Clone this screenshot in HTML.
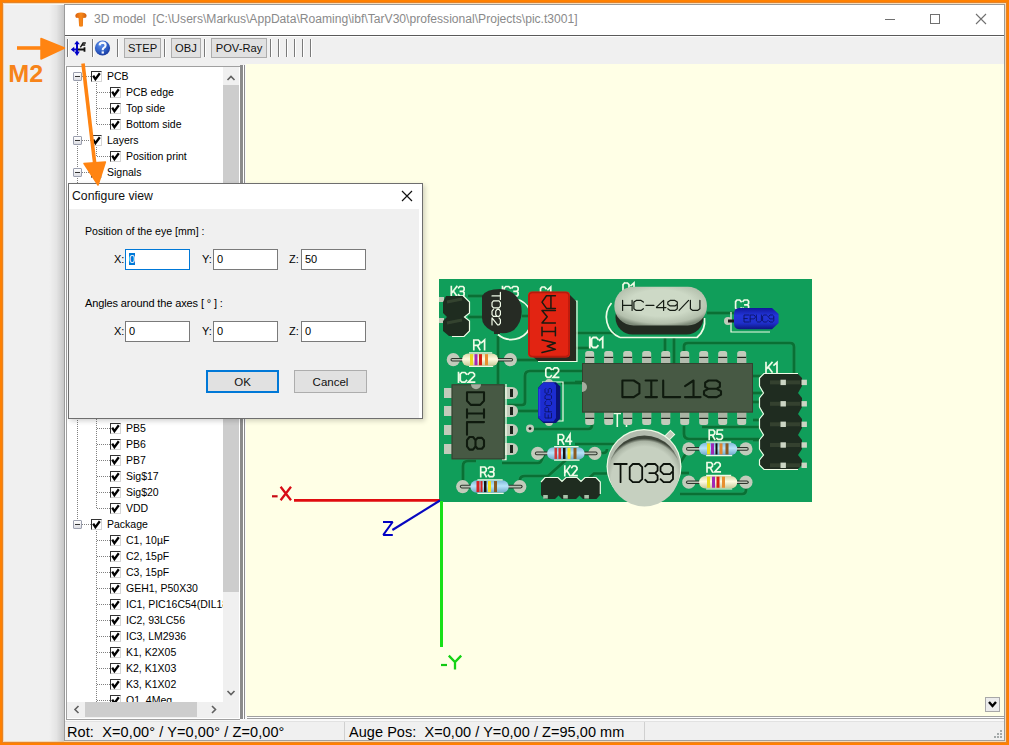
<!DOCTYPE html>
<html><head><meta charset="utf-8"><style>
*{margin:0;padding:0;box-sizing:border-box}
html,body{width:1009px;height:745px;overflow:hidden;background:#f0f0f0;font-family:"Liberation Sans",sans-serif;color:#000}
.a{position:absolute}
.sep{position:absolute;top:39px;width:1px;height:18px;background:#7a7a7a;box-shadow:1px 0 0 #fff}
.btn{position:absolute;top:38px;height:20px;border:1px solid #adadad;background:#e1e1e1;font-size:11.2px;line-height:19px;text-align:center;color:#111}
.tr{position:absolute;font-size:11px;line-height:16px;white-space:nowrap;transform:scaleX(0.955);transform-origin:0 0}
.cb{position:absolute;width:11px;height:11px;border-top:1px solid #333;border-left:1px solid #333;border-right:1px solid #d6d6d6;border-bottom:1px solid #d6d6d6;background:#fff}
.ck{position:absolute;left:-1px;top:-1px}
.mb{position:absolute;width:9px;height:9px;border:1px solid #9b9fae;border-radius:1px;background:linear-gradient(#fff,#dcdde3)}
.mb i{position:absolute;left:1px;top:3px;width:5px;height:1px;background:#333}
.vd{position:absolute;width:1px;background:repeating-linear-gradient(#808080 0 1px,transparent 1px 2px)}
.hd{position:absolute;height:1px;background:repeating-linear-gradient(90deg,#808080 0 1px,transparent 1px 2px)}
.lbl{position:absolute;font-size:11px;white-space:nowrap}
.inp{position:absolute;height:21px;width:65px;border:1px solid #7a7a7a;background:#fff;font-size:11px;padding-left:3px;line-height:19px}
.chev{position:absolute}
</style></head><body>
<div class="a" style="left:3px;top:3px;width:1003px;height:2px;background:#f6f8fa"></div>
<div class="a" style="left:49px;top:5px;width:15px;height:737px;background:linear-gradient(90deg,rgba(0,0,0,0),rgba(0,0,0,0.05) 50%,rgba(0,0,0,0.17))"></div>
<div class="a" style="left:64px;top:4px;width:941px;height:737px;background:#f0f0f0;border:1px solid #9a9a9a"></div>
<div class="a" style="left:65px;top:5px;width:939px;height:30px;background:#fff"></div>
<div class="a" style="left:65px;top:35px;width:939px;height:1px;background:#5a5a5a"></div>
<div class="a" style="left:65px;top:36px;width:939px;height:1px;background:#fff"></div>
<div class="a" style="left:94px;top:12px;font-size:12px;color:#8a8a8a;white-space:nowrap;transform:scaleX(1.0085);transform-origin:0 0">3D model&nbsp;&nbsp;[C:\Users\Markus\AppData\Roaming\ibf\TarV30\professional\Projects\pic.t3001]</div>
<svg class="a" style="left:0;top:0" width="1009" height="40">
 <path d="M885 19.5 H895" stroke="#707070" stroke-width="1"/>
 <rect x="930.5" y="14.5" width="9" height="9" fill="none" stroke="#707070" stroke-width="1"/>
 <path d="M976 14 L986 24 M986 14 L976 24" stroke="#707070" stroke-width="1.1"/>
 <defs><linearGradient id="tgi" x1="0" y1="0" x2="1" y2="0"><stop offset="0" stop-color="#d86010"/><stop offset="0.5" stop-color="#f88818"/><stop offset="1" stop-color="#d06010"/></linearGradient></defs>
 <path d="M75.3 15.5 Q75.8 12.6 81 12.6 Q86.2 12.6 86.6 15.5 Q86.6 17.9 85 17.9 Q83.6 17.3 83.1 18.2 L82.9 26.3 Q81 27 79.1 26.3 L78.6 18.2 Q78 17.3 76.8 17.9 Q75.2 17.7 75.3 15.5 Z" fill="url(#tgi)"/>
</svg>
<div class="sep" style="left:67px"></div>
<div class="sep" style="left:92px"></div>
<div class="sep" style="left:117px"></div>
<div class="btn" style="left:124px;width:37px">STEP</div>
<div class="sep" style="left:164px"></div>
<div class="btn" style="left:171px;width:30px">OBJ</div>
<div class="sep" style="left:204px"></div>
<div class="btn" style="left:211px;width:56px">POV-Ray</div>
<div class="sep" style="left:270px"></div>
<div class="sep" style="left:278px"></div>
<div class="sep" style="left:286px"></div>
<div class="sep" style="left:294px"></div>
<div class="sep" style="left:302px"></div>
<div class="sep" style="left:310px"></div>
<svg class="a" style="left:0;top:0" width="130" height="64">
 <defs><radialGradient id="hg" cx="0.38" cy="0.3" r="0.75"><stop offset="0" stop-color="#5d8fe8"/><stop offset="0.6" stop-color="#2d5cc4"/><stop offset="1" stop-color="#17369a"/></radialGradient></defs>
 <path d="M77 43.5 V52.5" stroke="#0000c8" stroke-width="2"/>
 <path d="M77 40.8 L74.2 44.2 H79.8 Z M77 56 L74.2 51.6 H79.8 Z M70.8 49.5 L74.2 46.8 V52.2 Z" fill="#0000c8"/>
 <path d="M73.5 49.5 H78" stroke="#0000c8" stroke-width="2"/>
 <path d="M78 49.5 H84.5 M84.5 47.2 V51.8" stroke="#101010" stroke-width="1.8"/>
 <path d="M80.4 47.3 L83.1 43 H85.8 M82.3 45 H85.2" stroke="#101010" stroke-width="1.3" fill="none"/>
 <circle cx="102.5" cy="48" r="7.6" fill="url(#hg)"/>
 <path d="M99.6 45.3 Q99.8 42.6 102.7 42.6 Q105.6 42.7 105.6 45.2 Q105.6 46.8 103.8 47.8 Q102.7 48.5 102.7 50.2" fill="none" stroke="#f4f8ff" stroke-width="2.1"/>
 <rect x="101.6" y="51.4" width="2.3" height="2.2" fill="#f4f8ff"/>
</svg>

<!-- tree panel -->
<div class="a" style="left:65px;top:65px;width:1px;height:655px;background:#fff"></div>
<div class="a" style="left:66px;top:66px;width:174px;height:654px;background:#fff;border-top:1px solid #a0a0a0;border-left:1px solid #a0a0a0;border-bottom:1px solid #a0a0a0"></div>
<div class="a" style="left:67px;top:67px;width:156px;height:635px;overflow:hidden"><div class="vd" style="left:10px;top:15px;height:438px"></div>
<div class="mb" style="left:6px;top:5px"><i></i></div>
<div class="hd" style="left:15px;top:9px;width:9px"></div>
<div class="cb" style="left:24px;top:4px"><svg class="ck" width="11" height="11" viewBox="0 0 11 11"><path d="M2.2 4.6 L4.4 8.2 L8.8 2.2" fill="none" stroke="#000" stroke-width="2.3" stroke-linejoin="miter"/></svg></div>
<div class="tr" style="left:40px;top:1px">PCB</div>
<div class="vd" style="left:29px;top:16px;height:42px"></div>
<div class="hd" style="left:30px;top:25px;width:13px"></div>
<div class="cb" style="left:43px;top:20px"><svg class="ck" width="11" height="11" viewBox="0 0 11 11"><path d="M2.2 4.6 L4.4 8.2 L8.8 2.2" fill="none" stroke="#000" stroke-width="2.3" stroke-linejoin="miter"/></svg></div>
<div class="tr" style="left:59px;top:17px">PCB edge</div>
<div class="hd" style="left:30px;top:41px;width:13px"></div>
<div class="cb" style="left:43px;top:36px"><svg class="ck" width="11" height="11" viewBox="0 0 11 11"><path d="M2.2 4.6 L4.4 8.2 L8.8 2.2" fill="none" stroke="#000" stroke-width="2.3" stroke-linejoin="miter"/></svg></div>
<div class="tr" style="left:59px;top:33px">Top side</div>
<div class="hd" style="left:30px;top:57px;width:13px"></div>
<div class="cb" style="left:43px;top:52px"><svg class="ck" width="11" height="11" viewBox="0 0 11 11"><path d="M2.2 4.6 L4.4 8.2 L8.8 2.2" fill="none" stroke="#000" stroke-width="2.3" stroke-linejoin="miter"/></svg></div>
<div class="tr" style="left:59px;top:49px">Bottom side</div>
<div class="mb" style="left:6px;top:69px"><i></i></div>
<div class="hd" style="left:15px;top:73px;width:9px"></div>
<div class="cb" style="left:24px;top:68px"><svg class="ck" width="11" height="11" viewBox="0 0 11 11"><path d="M2.2 4.6 L4.4 8.2 L8.8 2.2" fill="none" stroke="#000" stroke-width="2.3" stroke-linejoin="miter"/></svg></div>
<div class="tr" style="left:40px;top:65px">Layers</div>
<div class="vd" style="left:29px;top:80px;height:10px"></div>
<div class="hd" style="left:30px;top:89px;width:13px"></div>
<div class="cb" style="left:43px;top:84px"><svg class="ck" width="11" height="11" viewBox="0 0 11 11"><path d="M2.2 4.6 L4.4 8.2 L8.8 2.2" fill="none" stroke="#000" stroke-width="2.3" stroke-linejoin="miter"/></svg></div>
<div class="tr" style="left:59px;top:81px">Position print</div>
<div class="mb" style="left:6px;top:101px"><i></i></div>
<div class="hd" style="left:15px;top:105px;width:9px"></div>
<div class="cb" style="left:24px;top:100px"><svg class="ck" width="11" height="11" viewBox="0 0 11 11"><path d="M2.2 4.6 L4.4 8.2 L8.8 2.2" fill="none" stroke="#000" stroke-width="2.3" stroke-linejoin="miter"/></svg></div>
<div class="tr" style="left:40px;top:97px">Signals</div>
<div class="vd" style="left:29px;top:112px;height:330px"></div>
<div class="hd" style="left:30px;top:121px;width:13px"></div>
<div class="cb" style="left:43px;top:116px"><svg class="ck" width="11" height="11" viewBox="0 0 11 11"><path d="M2.2 4.6 L4.4 8.2 L8.8 2.2" fill="none" stroke="#000" stroke-width="2.3" stroke-linejoin="miter"/></svg></div>
<div class="tr" style="left:59px;top:113px">N$0</div>
<div class="hd" style="left:30px;top:137px;width:13px"></div>
<div class="cb" style="left:43px;top:132px"><svg class="ck" width="11" height="11" viewBox="0 0 11 11"><path d="M2.2 4.6 L4.4 8.2 L8.8 2.2" fill="none" stroke="#000" stroke-width="2.3" stroke-linejoin="miter"/></svg></div>
<div class="tr" style="left:59px;top:129px">N$1</div>
<div class="hd" style="left:30px;top:153px;width:13px"></div>
<div class="cb" style="left:43px;top:148px"><svg class="ck" width="11" height="11" viewBox="0 0 11 11"><path d="M2.2 4.6 L4.4 8.2 L8.8 2.2" fill="none" stroke="#000" stroke-width="2.3" stroke-linejoin="miter"/></svg></div>
<div class="tr" style="left:59px;top:145px">N$2</div>
<div class="hd" style="left:30px;top:169px;width:13px"></div>
<div class="cb" style="left:43px;top:164px"><svg class="ck" width="11" height="11" viewBox="0 0 11 11"><path d="M2.2 4.6 L4.4 8.2 L8.8 2.2" fill="none" stroke="#000" stroke-width="2.3" stroke-linejoin="miter"/></svg></div>
<div class="tr" style="left:59px;top:161px">N$3</div>
<div class="hd" style="left:30px;top:185px;width:13px"></div>
<div class="cb" style="left:43px;top:180px"><svg class="ck" width="11" height="11" viewBox="0 0 11 11"><path d="M2.2 4.6 L4.4 8.2 L8.8 2.2" fill="none" stroke="#000" stroke-width="2.3" stroke-linejoin="miter"/></svg></div>
<div class="tr" style="left:59px;top:177px">N$4</div>
<div class="hd" style="left:30px;top:201px;width:13px"></div>
<div class="cb" style="left:43px;top:196px"><svg class="ck" width="11" height="11" viewBox="0 0 11 11"><path d="M2.2 4.6 L4.4 8.2 L8.8 2.2" fill="none" stroke="#000" stroke-width="2.3" stroke-linejoin="miter"/></svg></div>
<div class="tr" style="left:59px;top:193px">N$5</div>
<div class="hd" style="left:30px;top:217px;width:13px"></div>
<div class="cb" style="left:43px;top:212px"><svg class="ck" width="11" height="11" viewBox="0 0 11 11"><path d="M2.2 4.6 L4.4 8.2 L8.8 2.2" fill="none" stroke="#000" stroke-width="2.3" stroke-linejoin="miter"/></svg></div>
<div class="tr" style="left:59px;top:209px">N$6</div>
<div class="hd" style="left:30px;top:233px;width:13px"></div>
<div class="cb" style="left:43px;top:228px"><svg class="ck" width="11" height="11" viewBox="0 0 11 11"><path d="M2.2 4.6 L4.4 8.2 L8.8 2.2" fill="none" stroke="#000" stroke-width="2.3" stroke-linejoin="miter"/></svg></div>
<div class="tr" style="left:59px;top:225px">N$7</div>
<div class="hd" style="left:30px;top:249px;width:13px"></div>
<div class="cb" style="left:43px;top:244px"><svg class="ck" width="11" height="11" viewBox="0 0 11 11"><path d="M2.2 4.6 L4.4 8.2 L8.8 2.2" fill="none" stroke="#000" stroke-width="2.3" stroke-linejoin="miter"/></svg></div>
<div class="tr" style="left:59px;top:241px">N$8</div>
<div class="hd" style="left:30px;top:265px;width:13px"></div>
<div class="cb" style="left:43px;top:260px"><svg class="ck" width="11" height="11" viewBox="0 0 11 11"><path d="M2.2 4.6 L4.4 8.2 L8.8 2.2" fill="none" stroke="#000" stroke-width="2.3" stroke-linejoin="miter"/></svg></div>
<div class="tr" style="left:59px;top:257px">N$9</div>
<div class="hd" style="left:30px;top:281px;width:13px"></div>
<div class="cb" style="left:43px;top:276px"><svg class="ck" width="11" height="11" viewBox="0 0 11 11"><path d="M2.2 4.6 L4.4 8.2 L8.8 2.2" fill="none" stroke="#000" stroke-width="2.3" stroke-linejoin="miter"/></svg></div>
<div class="tr" style="left:59px;top:273px">N$10</div>
<div class="hd" style="left:30px;top:297px;width:13px"></div>
<div class="cb" style="left:43px;top:292px"><svg class="ck" width="11" height="11" viewBox="0 0 11 11"><path d="M2.2 4.6 L4.4 8.2 L8.8 2.2" fill="none" stroke="#000" stroke-width="2.3" stroke-linejoin="miter"/></svg></div>
<div class="tr" style="left:59px;top:289px">N$11</div>
<div class="hd" style="left:30px;top:313px;width:13px"></div>
<div class="cb" style="left:43px;top:308px"><svg class="ck" width="11" height="11" viewBox="0 0 11 11"><path d="M2.2 4.6 L4.4 8.2 L8.8 2.2" fill="none" stroke="#000" stroke-width="2.3" stroke-linejoin="miter"/></svg></div>
<div class="tr" style="left:59px;top:305px">N$12</div>
<div class="hd" style="left:30px;top:329px;width:13px"></div>
<div class="cb" style="left:43px;top:324px"><svg class="ck" width="11" height="11" viewBox="0 0 11 11"><path d="M2.2 4.6 L4.4 8.2 L8.8 2.2" fill="none" stroke="#000" stroke-width="2.3" stroke-linejoin="miter"/></svg></div>
<div class="tr" style="left:59px;top:321px">N$13</div>
<div class="hd" style="left:30px;top:345px;width:13px"></div>
<div class="cb" style="left:43px;top:340px"><svg class="ck" width="11" height="11" viewBox="0 0 11 11"><path d="M2.2 4.6 L4.4 8.2 L8.8 2.2" fill="none" stroke="#000" stroke-width="2.3" stroke-linejoin="miter"/></svg></div>
<div class="tr" style="left:59px;top:337px">N$14</div>
<div class="hd" style="left:30px;top:361px;width:13px"></div>
<div class="cb" style="left:43px;top:356px"><svg class="ck" width="11" height="11" viewBox="0 0 11 11"><path d="M2.2 4.6 L4.4 8.2 L8.8 2.2" fill="none" stroke="#000" stroke-width="2.3" stroke-linejoin="miter"/></svg></div>
<div class="tr" style="left:59px;top:353px">PB5</div>
<div class="hd" style="left:30px;top:377px;width:13px"></div>
<div class="cb" style="left:43px;top:372px"><svg class="ck" width="11" height="11" viewBox="0 0 11 11"><path d="M2.2 4.6 L4.4 8.2 L8.8 2.2" fill="none" stroke="#000" stroke-width="2.3" stroke-linejoin="miter"/></svg></div>
<div class="tr" style="left:59px;top:369px">PB6</div>
<div class="hd" style="left:30px;top:393px;width:13px"></div>
<div class="cb" style="left:43px;top:388px"><svg class="ck" width="11" height="11" viewBox="0 0 11 11"><path d="M2.2 4.6 L4.4 8.2 L8.8 2.2" fill="none" stroke="#000" stroke-width="2.3" stroke-linejoin="miter"/></svg></div>
<div class="tr" style="left:59px;top:385px">PB7</div>
<div class="hd" style="left:30px;top:409px;width:13px"></div>
<div class="cb" style="left:43px;top:404px"><svg class="ck" width="11" height="11" viewBox="0 0 11 11"><path d="M2.2 4.6 L4.4 8.2 L8.8 2.2" fill="none" stroke="#000" stroke-width="2.3" stroke-linejoin="miter"/></svg></div>
<div class="tr" style="left:59px;top:401px">Sig$17</div>
<div class="hd" style="left:30px;top:425px;width:13px"></div>
<div class="cb" style="left:43px;top:420px"><svg class="ck" width="11" height="11" viewBox="0 0 11 11"><path d="M2.2 4.6 L4.4 8.2 L8.8 2.2" fill="none" stroke="#000" stroke-width="2.3" stroke-linejoin="miter"/></svg></div>
<div class="tr" style="left:59px;top:417px">Sig$20</div>
<div class="hd" style="left:30px;top:441px;width:13px"></div>
<div class="cb" style="left:43px;top:436px"><svg class="ck" width="11" height="11" viewBox="0 0 11 11"><path d="M2.2 4.6 L4.4 8.2 L8.8 2.2" fill="none" stroke="#000" stroke-width="2.3" stroke-linejoin="miter"/></svg></div>
<div class="tr" style="left:59px;top:433px">VDD</div>
<div class="mb" style="left:6px;top:453px"><i></i></div>
<div class="hd" style="left:15px;top:457px;width:9px"></div>
<div class="cb" style="left:24px;top:452px"><svg class="ck" width="11" height="11" viewBox="0 0 11 11"><path d="M2.2 4.6 L4.4 8.2 L8.8 2.2" fill="none" stroke="#000" stroke-width="2.3" stroke-linejoin="miter"/></svg></div>
<div class="tr" style="left:40px;top:449px">Package</div>
<div class="vd" style="left:29px;top:464px;height:186px"></div>
<div class="hd" style="left:30px;top:473px;width:13px"></div>
<div class="cb" style="left:43px;top:468px"><svg class="ck" width="11" height="11" viewBox="0 0 11 11"><path d="M2.2 4.6 L4.4 8.2 L8.8 2.2" fill="none" stroke="#000" stroke-width="2.3" stroke-linejoin="miter"/></svg></div>
<div class="tr" style="left:59px;top:465px">C1, 10µF</div>
<div class="hd" style="left:30px;top:489px;width:13px"></div>
<div class="cb" style="left:43px;top:484px"><svg class="ck" width="11" height="11" viewBox="0 0 11 11"><path d="M2.2 4.6 L4.4 8.2 L8.8 2.2" fill="none" stroke="#000" stroke-width="2.3" stroke-linejoin="miter"/></svg></div>
<div class="tr" style="left:59px;top:481px">C2, 15pF</div>
<div class="hd" style="left:30px;top:505px;width:13px"></div>
<div class="cb" style="left:43px;top:500px"><svg class="ck" width="11" height="11" viewBox="0 0 11 11"><path d="M2.2 4.6 L4.4 8.2 L8.8 2.2" fill="none" stroke="#000" stroke-width="2.3" stroke-linejoin="miter"/></svg></div>
<div class="tr" style="left:59px;top:497px">C3, 15pF</div>
<div class="hd" style="left:30px;top:521px;width:13px"></div>
<div class="cb" style="left:43px;top:516px"><svg class="ck" width="11" height="11" viewBox="0 0 11 11"><path d="M2.2 4.6 L4.4 8.2 L8.8 2.2" fill="none" stroke="#000" stroke-width="2.3" stroke-linejoin="miter"/></svg></div>
<div class="tr" style="left:59px;top:513px">GEH1, P50X30</div>
<div class="hd" style="left:30px;top:537px;width:13px"></div>
<div class="cb" style="left:43px;top:532px"><svg class="ck" width="11" height="11" viewBox="0 0 11 11"><path d="M2.2 4.6 L4.4 8.2 L8.8 2.2" fill="none" stroke="#000" stroke-width="2.3" stroke-linejoin="miter"/></svg></div>
<div class="tr" style="left:59px;top:529px">IC1, PIC16C54(DIL18)</div>
<div class="hd" style="left:30px;top:553px;width:13px"></div>
<div class="cb" style="left:43px;top:548px"><svg class="ck" width="11" height="11" viewBox="0 0 11 11"><path d="M2.2 4.6 L4.4 8.2 L8.8 2.2" fill="none" stroke="#000" stroke-width="2.3" stroke-linejoin="miter"/></svg></div>
<div class="tr" style="left:59px;top:545px">IC2, 93LC56</div>
<div class="hd" style="left:30px;top:569px;width:13px"></div>
<div class="cb" style="left:43px;top:564px"><svg class="ck" width="11" height="11" viewBox="0 0 11 11"><path d="M2.2 4.6 L4.4 8.2 L8.8 2.2" fill="none" stroke="#000" stroke-width="2.3" stroke-linejoin="miter"/></svg></div>
<div class="tr" style="left:59px;top:561px">IC3, LM2936</div>
<div class="hd" style="left:30px;top:585px;width:13px"></div>
<div class="cb" style="left:43px;top:580px"><svg class="ck" width="11" height="11" viewBox="0 0 11 11"><path d="M2.2 4.6 L4.4 8.2 L8.8 2.2" fill="none" stroke="#000" stroke-width="2.3" stroke-linejoin="miter"/></svg></div>
<div class="tr" style="left:59px;top:577px">K1, K2X05</div>
<div class="hd" style="left:30px;top:601px;width:13px"></div>
<div class="cb" style="left:43px;top:596px"><svg class="ck" width="11" height="11" viewBox="0 0 11 11"><path d="M2.2 4.6 L4.4 8.2 L8.8 2.2" fill="none" stroke="#000" stroke-width="2.3" stroke-linejoin="miter"/></svg></div>
<div class="tr" style="left:59px;top:593px">K2, K1X03</div>
<div class="hd" style="left:30px;top:617px;width:13px"></div>
<div class="cb" style="left:43px;top:612px"><svg class="ck" width="11" height="11" viewBox="0 0 11 11"><path d="M2.2 4.6 L4.4 8.2 L8.8 2.2" fill="none" stroke="#000" stroke-width="2.3" stroke-linejoin="miter"/></svg></div>
<div class="tr" style="left:59px;top:609px">K3, K1X02</div>
<div class="hd" style="left:30px;top:633px;width:13px"></div>
<div class="cb" style="left:43px;top:628px"><svg class="ck" width="11" height="11" viewBox="0 0 11 11"><path d="M2.2 4.6 L4.4 8.2 L8.8 2.2" fill="none" stroke="#000" stroke-width="2.3" stroke-linejoin="miter"/></svg></div>
<div class="tr" style="left:59px;top:625px">Q1, 4Meg</div>
<div class="hd" style="left:30px;top:649px;width:13px"></div>
<div class="cb" style="left:43px;top:644px"><svg class="ck" width="11" height="11" viewBox="0 0 11 11"><path d="M2.2 4.6 L4.4 8.2 L8.8 2.2" fill="none" stroke="#000" stroke-width="2.3" stroke-linejoin="miter"/></svg></div>
<div class="tr" style="left:59px;top:641px">R1, 1k</div></div>
<!-- v scrollbar -->
<div class="a" style="left:223px;top:67px;width:16px;height:635px;background:#f0f0f0"></div>
<div class="a" style="left:223px;top:85px;width:16px;height:507px;background:#cdcdcd"></div>
<!-- h scrollbar -->
<div class="a" style="left:67px;top:702px;width:172px;height:16px;background:#f0f0f0"></div><div class="a" style="left:67px;top:718px;width:173px;height:1px;background:#fff"></div>
<div class="a" style="left:85px;top:702px;width:112px;height:15px;background:#cdcdcd"></div>
<svg class="a" style="left:0;top:0;" width="245" height="720">
 <path d="M227.5 80 L231 76.5 L234.5 80" fill="none" stroke="#606060" stroke-width="1.6"/>
 <path d="M227.5 691 L231 694.5 L234.5 691" fill="none" stroke="#606060" stroke-width="1.6"/>
 <path d="M78.5 706 L75 709.5 L78.5 713" fill="none" stroke="#606060" stroke-width="1.6"/>
 <path d="M212 706 L215.5 709.5 L212 713" fill="none" stroke="#606060" stroke-width="1.6"/>
</svg>
<!-- splitter -->
<div class="a" style="left:240px;top:65px;width:3px;height:655px;background:#8c8c8c"></div>
<div class="a" style="left:243px;top:65px;width:1px;height:655px;background:#fff"></div>
<div class="a" style="left:244px;top:65px;width:1px;height:656px;background:#8c8c8c"></div>

<!-- viewport -->
<div class="a" style="left:245px;top:64px;width:759px;height:655px;background:#fafafa"></div>
<div class="a" style="left:246px;top:64px;width:758px;height:652px;background:#ffffe6"></div>
<div class="a" style="left:247px;top:716px;width:757px;height:1px;background:#a0a0a0"></div>
<div class="a" style="left:247px;top:717px;width:757px;height:1px;background:#fff"></div>
<div class="a" style="left:247px;top:718px;width:757px;height:1px;background:#a0a0a0"></div>
<div class="a" style="left:985px;top:697px;width:15px;height:15px;background:#ececec;border:1px solid #a8a8a8"></div>
<svg class="a" style="left:0;top:0" width="1009" height="745">
<defs><radialGradient id="qg" cx="0.5" cy="0.42" r="0.62"><stop offset="0.55" stop-color="#cdd9c6"/><stop offset="0.85" stop-color="#b4c0ad"/><stop offset="1" stop-color="#7d8a78"/></radialGradient><radialGradient id="tg" cx="0.5" cy="0.62" r="0.58"><stop offset="0.8" stop-color="#c6d0c0"/><stop offset="0.93" stop-color="#aab4a4"/><stop offset="1" stop-color="#3e463a"/></radialGradient><linearGradient id="bl" x1="0" y1="0" x2="0" y2="1"><stop offset="0" stop-color="#10189a"/><stop offset="0.35" stop-color="#2234d8"/><stop offset="0.7" stop-color="#1f30cc"/><stop offset="1" stop-color="#0c1480"/></linearGradient><linearGradient id="bl2" x1="0" y1="0" x2="1" y2="0"><stop offset="0" stop-color="#10189a"/><stop offset="0.3" stop-color="#2234d8"/><stop offset="0.7" stop-color="#1f30cc"/><stop offset="1" stop-color="#0a107a"/></linearGradient><linearGradient id="rc" x1="0" y1="0" x2="0" y2="1"><stop offset="0" stop-color="#d8d8a8"/><stop offset="0.45" stop-color="#fffbe0"/><stop offset="1" stop-color="#c8c898"/></linearGradient><linearGradient id="rb" x1="0" y1="0" x2="0" y2="1"><stop offset="0" stop-color="#7fb8d8"/><stop offset="0.45" stop-color="#b8e4fa"/><stop offset="1" stop-color="#6fa8c8"/></linearGradient></defs>
<rect x="439" y="279" width="373" height="223" fill="#109e5a"/>
<path d="M468 296 H483" fill="none" stroke="#1b9a5c" stroke-width="4.6"/>
<path d="M468 317 H483" fill="none" stroke="#1b9a5c" stroke-width="4.6"/>
<path d="M522 316 H528" fill="none" stroke="#1b9a5c" stroke-width="4.6"/>
<path d="M498 336 V384" fill="none" stroke="#1b9a5c" stroke-width="4.6"/>
<path d="M510 360 H538" fill="none" stroke="#1b9a5c" stroke-width="4.6"/>
<path d="M508 405 H522 Q525 405 525 402 V376 Q525 371 530 371 H583" fill="none" stroke="#1b9a5c" stroke-width="4.6"/>
<path d="M508 411 H539" fill="none" stroke="#1b9a5c" stroke-width="4.6"/>
<path d="M561 383 H583" fill="none" stroke="#1b9a5c" stroke-width="4.6"/>
<path d="M576 333 H615" fill="none" stroke="#1b9a5c" stroke-width="4.6"/>
<path d="M576 348 H590" fill="none" stroke="#1b9a5c" stroke-width="4.6"/>
<path d="M707 313 H734" fill="none" stroke="#1b9a5c" stroke-width="4.6"/>
<path d="M665 337 V352" fill="none" stroke="#1b9a5c" stroke-width="4.6"/>
<path d="M674 337 V363" fill="none" stroke="#1b9a5c" stroke-width="4.6"/>
<path d="M684 352 V346 Q684 343 688 343 H790 Q794 343 794 347 V374" fill="none" stroke="#1b9a5c" stroke-width="4.6"/>
<path d="M753 376 H780" fill="none" stroke="#1b9a5c" stroke-width="4.6"/>
<path d="M753 393 H780" fill="none" stroke="#1b9a5c" stroke-width="4.6"/>
<path d="M753 402 H780" fill="none" stroke="#1b9a5c" stroke-width="4.6"/>
<path d="M530 429 H588 Q592 429 592 425 V420" fill="none" stroke="#1b9a5c" stroke-width="4.6"/>
<path d="M463 486 V466 Q463 461 468 461 H476" fill="none" stroke="#1b9a5c" stroke-width="4.6"/>
<path d="M502 463 H538 Q541 463 542 459 L544 455" fill="none" stroke="#1b9a5c" stroke-width="4.6"/>
<path d="M520 486 V480 Q520 476 525 476 H548 L566 460" fill="none" stroke="#1b9a5c" stroke-width="4.6"/>
<path d="M595 453 H603 Q607 453 607 449" fill="none" stroke="#1b9a5c" stroke-width="4.6"/>
<path d="M589 478 L594 473.5 H608" fill="none" stroke="#1b9a5c" stroke-width="4.6"/>
<path d="M575 444 H615" fill="none" stroke="#1b9a5c" stroke-width="4.6"/>
<path d="M684 426 V434 Q684 439 690 439 H760" fill="none" stroke="#1b9a5c" stroke-width="4.6"/>
<path d="M702 427 H760" fill="none" stroke="#1b9a5c" stroke-width="4.6"/>
<path d="M680 463 L689 449" fill="none" stroke="#1b9a5c" stroke-width="4.6"/>
<path d="M680 473 H689" fill="none" stroke="#1b9a5c" stroke-width="4.6"/>
<path d="M746 482 V490 Q746 494 742 494 H680" fill="none" stroke="#1b9a5c" stroke-width="4.6"/>
<path d="M753 420 H780" fill="none" stroke="#1b9a5c" stroke-width="4.6"/>
<path d="M753 440 H780" fill="none" stroke="#1b9a5c" stroke-width="4.6"/>
<path d="M600 371 H583" fill="none" stroke="#1b9a5c" stroke-width="4.6"/>
<path d="M575 382 H583" fill="none" stroke="#1b9a5c" stroke-width="4.6"/>
<path d="M468 296 H483" fill="none" stroke="#0a7034" stroke-width="2.7"/>
<path d="M468 317 H483" fill="none" stroke="#0a7034" stroke-width="2.7"/>
<path d="M522 316 H528" fill="none" stroke="#0a7034" stroke-width="2.7"/>
<path d="M498 336 V384" fill="none" stroke="#0a7034" stroke-width="2.7"/>
<path d="M510 360 H538" fill="none" stroke="#0a7034" stroke-width="2.7"/>
<path d="M508 405 H522 Q525 405 525 402 V376 Q525 371 530 371 H583" fill="none" stroke="#0a7034" stroke-width="2.7"/>
<path d="M508 411 H539" fill="none" stroke="#0a7034" stroke-width="2.7"/>
<path d="M561 383 H583" fill="none" stroke="#0a7034" stroke-width="2.7"/>
<path d="M576 333 H615" fill="none" stroke="#0a7034" stroke-width="2.7"/>
<path d="M576 348 H590" fill="none" stroke="#0a7034" stroke-width="2.7"/>
<path d="M707 313 H734" fill="none" stroke="#0a7034" stroke-width="2.7"/>
<path d="M665 337 V352" fill="none" stroke="#0a7034" stroke-width="2.7"/>
<path d="M674 337 V363" fill="none" stroke="#0a7034" stroke-width="2.7"/>
<path d="M684 352 V346 Q684 343 688 343 H790 Q794 343 794 347 V374" fill="none" stroke="#0a7034" stroke-width="2.7"/>
<path d="M753 376 H780" fill="none" stroke="#0a7034" stroke-width="2.7"/>
<path d="M753 393 H780" fill="none" stroke="#0a7034" stroke-width="2.7"/>
<path d="M753 402 H780" fill="none" stroke="#0a7034" stroke-width="2.7"/>
<path d="M530 429 H588 Q592 429 592 425 V420" fill="none" stroke="#0a7034" stroke-width="2.7"/>
<path d="M463 486 V466 Q463 461 468 461 H476" fill="none" stroke="#0a7034" stroke-width="2.7"/>
<path d="M502 463 H538 Q541 463 542 459 L544 455" fill="none" stroke="#0a7034" stroke-width="2.7"/>
<path d="M520 486 V480 Q520 476 525 476 H548 L566 460" fill="none" stroke="#0a7034" stroke-width="2.7"/>
<path d="M595 453 H603 Q607 453 607 449" fill="none" stroke="#0a7034" stroke-width="2.7"/>
<path d="M589 478 L594 473.5 H608" fill="none" stroke="#0a7034" stroke-width="2.7"/>
<path d="M575 444 H615" fill="none" stroke="#0a7034" stroke-width="2.7"/>
<path d="M684 426 V434 Q684 439 690 439 H760" fill="none" stroke="#0a7034" stroke-width="2.7"/>
<path d="M702 427 H760" fill="none" stroke="#0a7034" stroke-width="2.7"/>
<path d="M680 463 L689 449" fill="none" stroke="#0a7034" stroke-width="2.7"/>
<path d="M680 473 H689" fill="none" stroke="#0a7034" stroke-width="2.7"/>
<path d="M746 482 V490 Q746 494 742 494 H680" fill="none" stroke="#0a7034" stroke-width="2.7"/>
<path d="M753 420 H780" fill="none" stroke="#0a7034" stroke-width="2.7"/>
<path d="M753 440 H780" fill="none" stroke="#0a7034" stroke-width="2.7"/>
<path d="M600 371 H583" fill="none" stroke="#0a7034" stroke-width="2.7"/>
<path d="M575 382 H583" fill="none" stroke="#0a7034" stroke-width="2.7"/>
<path d="M451.30 286.50 L451.30 296.10 M456.80 286.50 L451.30 293.43 M453.32 290.98 L456.80 296.10 M458.60 287.78 L459.70 286.50 L463.00 286.50 L464.10 287.78 L464.10 290.02 L463.00 291.30 L460.43 291.30 M463.00 291.30 L464.10 292.58 L464.10 294.82 L463.00 296.10 L459.70 296.10 L458.60 294.82" fill="none" stroke="#effbe6" stroke-width="1.7" stroke-linecap="square" stroke-linejoin="miter"/>
<path d="M502.50 286.50 L502.50 296.10 M510.30 288.10 L508.80 286.50 L505.80 286.50 L504.30 288.10 L504.30 294.50 L505.80 296.10 L508.80 296.10 L510.30 294.50 M512.10 287.78 L513.30 286.50 L516.90 286.50 L518.10 287.78 L518.10 290.02 L516.90 291.30 L514.10 291.30 M516.90 291.30 L518.10 292.58 L518.10 294.82 L516.90 296.10 L513.30 296.10 L512.10 294.82" fill="none" stroke="#effbe6" stroke-width="1.7" stroke-linecap="square" stroke-linejoin="miter"/>
<path d="M473.80 349.60 L473.80 340.00 L478.30 340.00 L479.80 341.60 L479.80 343.73 L478.30 345.33 L473.80 345.33 M477.30 345.33 L479.80 349.60 M481.60 342.67 L484.60 340.00 L484.60 349.60" fill="none" stroke="#effbe6" stroke-width="1.7" stroke-linecap="square" stroke-linejoin="miter"/>
<path d="M589.80 337.50 L589.80 347.50 M597.80 339.17 L596.25 337.50 L593.15 337.50 L591.60 339.17 L591.60 345.83 L593.15 347.50 L596.25 347.50 L597.80 345.83 M599.60 340.28 L602.70 337.50 L602.70 347.50" fill="none" stroke="#effbe6" stroke-width="1.8" stroke-linecap="square" stroke-linejoin="miter"/>
<path d="M458.50 372.50 L458.50 382.10 M466.50 374.10 L464.95 372.50 L461.85 372.50 L460.30 374.10 L460.30 380.50 L461.85 382.10 L464.95 382.10 L466.50 380.50 M468.30 374.10 L469.85 372.50 L472.95 372.50 L474.50 374.10 L474.50 375.91 L468.30 382.10 L474.50 382.10" fill="none" stroke="#effbe6" stroke-width="1.7" stroke-linecap="square" stroke-linejoin="miter"/>
<path d="M551.30 369.40 L549.92 367.80 L547.17 367.80 L545.80 369.40 L545.80 375.80 L547.17 377.40 L549.92 377.40 L551.30 375.80 M553.10 369.40 L554.47 367.80 L557.22 367.80 L558.60 369.40 L558.60 371.21 L553.10 377.40 L558.60 377.40" fill="none" stroke="#effbe6" stroke-width="1.7" stroke-linecap="square" stroke-linejoin="miter"/>
<path d="M558.20 444.10 L558.20 434.50 L562.33 434.50 L563.70 436.10 L563.70 438.23 L562.33 439.83 L558.20 439.83 M561.41 439.83 L563.70 444.10 M570.03 444.10 L570.03 434.50 L565.90 440.90 L565.90 441.43 L571.40 441.43" fill="none" stroke="#effbe6" stroke-width="1.7" stroke-linecap="square" stroke-linejoin="miter"/>
<path d="M480.70 476.60 L480.70 467.00 L484.82 467.00 L486.20 468.60 L486.20 470.73 L484.82 472.33 L480.70 472.33 M483.91 472.33 L486.20 476.60 M488.40 468.28 L489.50 467.00 L492.80 467.00 L493.90 468.28 L493.90 470.52 L492.80 471.80 L490.23 471.80 M492.80 471.80 L493.90 473.08 L493.90 475.32 L492.80 476.60 L489.50 476.60 L488.40 475.32" fill="none" stroke="#effbe6" stroke-width="1.7" stroke-linecap="square" stroke-linejoin="miter"/>
<path d="M564.80 466.00 L564.80 475.60 M570.00 466.00 L564.80 472.93 M566.71 470.48 L570.00 475.60 M571.80 467.60 L573.10 466.00 L575.70 466.00 L577.00 467.60 L577.00 469.41 L571.80 475.60 L577.00 475.60" fill="none" stroke="#effbe6" stroke-width="1.7" stroke-linecap="square" stroke-linejoin="miter"/>
<path d="M741.10 301.60 L739.73 300.00 L736.98 300.00 L735.60 301.60 L735.60 308.00 L736.98 309.60 L739.73 309.60 L741.10 308.00 M743.10 301.28 L744.20 300.00 L747.50 300.00 L748.60 301.28 L748.60 303.52 L747.50 304.80 L744.93 304.80 M747.50 304.80 L748.60 306.08 L748.60 308.32 L747.50 309.60 L744.20 309.60 L743.10 308.32" fill="none" stroke="#effbe6" stroke-width="1.7" stroke-linecap="square" stroke-linejoin="miter"/>
<path d="M766.00 362.50 L766.00 372.10 M772.00 362.50 L766.00 369.43 M768.20 366.98 L772.00 372.10 M774.00 365.17 L777.00 362.50 L777.00 372.10" fill="none" stroke="#effbe6" stroke-width="1.7" stroke-linecap="square" stroke-linejoin="miter"/>
<path d="M709.20 439.40 L709.20 430.00 L713.33 430.00 L714.70 431.57 L714.70 433.66 L713.33 435.22 L709.20 435.22 M712.41 435.22 L714.70 439.40 M722.40 430.00 L717.36 430.00 L716.90 434.18 L721.03 434.18 L722.40 435.74 L722.40 437.83 L721.03 439.40 L718.00 439.40 L716.90 438.36" fill="none" stroke="#effbe6" stroke-width="1.7" stroke-linecap="square" stroke-linejoin="miter"/>
<path d="M707.00 471.90 L707.00 462.50 L711.12 462.50 L712.50 464.07 L712.50 466.16 L711.12 467.72 L707.00 467.72 M710.21 467.72 L712.50 471.90 M714.70 464.07 L716.08 462.50 L718.83 462.50 L720.20 464.07 L720.20 465.84 L714.70 471.90 L720.20 471.90" fill="none" stroke="#effbe6" stroke-width="1.7" stroke-linecap="square" stroke-linejoin="miter"/>
<path d="M546.00 288.60 L544.62 287.00 L541.88 287.00 L540.50 288.60 L540.50 295.00 L541.88 296.60 L544.62 296.60 L546.00 295.00 M548.00 289.67 L550.75 287.00 L550.75 296.60" fill="none" stroke="#effbe6" stroke-width="1.7" stroke-linecap="square" stroke-linejoin="miter"/>
<path d="M624.50 283.00 L627.50 283.00 L629.00 284.60 L629.00 291.00 L627.50 292.60 L624.50 292.60 L623.00 291.00 L623.00 284.60 L624.50 283.00 M626.80 289.93 L629.00 292.60 M631.00 285.67 L634.00 283.00 L634.00 292.60" fill="none" stroke="#effbe6" stroke-width="1.7" stroke-linecap="square" stroke-linejoin="miter"/>
<path d="M613.5 413.5 H621 M617.3 413.5 V427 M626.5 419 V427" stroke="#effbe6" stroke-width="1.6"/>
<rect x="439" y="297" width="5" height="5" fill="#c2cbbb"/><rect x="439" y="318" width="5" height="5" fill="#c2cbbb"/>
<path d="M446 296 H463 L469 302 V313 L464 317 L469 321 V331 L464 336 H449 L443 331 V321 L447 317 L443 313 V302 Z" fill="#1f2c20"/>
<path d="M452 336.5 H464 L469.5 331 V321 L464.5 317 L469.5 313 V302 L463 295.5" fill="none" stroke="#effbe6" stroke-width="1.2"/>
<path d="M447 302 L462 299 M447 323 L462 320" stroke="#34432f" stroke-width="3"/>
<path d="M498 334.5 A20.5 20.5 0 1 0 516 299" fill="none" stroke="#effbe6" stroke-width="1.7"/>
<path d="M482 296 Q486 289 500 289 Q516 290 521 305 Q524 320 514 330 Q505 336 492 331 Q482 326 482 318 Z" fill="#262b24"/>
<rect x="494" y="329" width="6" height="5" fill="#262b24"/>
<path d="M500.40 292.40 L500.40 299.40 M500.40 295.90 L492.00 295.90 M500.40 302.65 L500.40 306.15 L499.00 307.90 L493.40 307.90 L492.00 306.15 L492.00 302.65 L493.40 300.90 L499.00 300.90 L500.40 302.65 M497.13 316.40 L495.73 314.65 L495.73 311.15 L497.13 309.40 L499.00 309.40 L500.40 311.15 L500.40 314.65 L499.00 316.40 L493.40 316.40 L492.00 314.65 L492.00 311.15 L493.40 309.40 M499.00 317.90 L500.40 319.65 L500.40 323.15 L499.00 324.90 L497.60 324.90 L492.00 317.90 L492.00 324.90" fill="none" stroke="#f0fbe8" stroke-width="1.2" stroke-linecap="round" stroke-linejoin="round"/>
<path d="M538 301 H577 V361.5 H538" fill="none" stroke="#effbe6" stroke-width="1.2"/>
<path d="M533 295 H570 L576 301 V361 H538 L533 357 Z" fill="#262b20"/>
<rect x="528" y="291.5" width="42" height="66" rx="4" fill="#e22412"/>
<rect x="529" y="292.5" width="40" height="64" rx="3.5" fill="none" stroke="#b81a0c" stroke-width="1.6"/>
<path d="M542.00 352.50 L555.40 349.35 L547.21 346.20 L555.40 343.05 L542.00 339.90 M542.00 335.70 L542.00 327.30 M542.00 331.50 L555.40 331.50 M555.40 335.70 L555.40 327.30 M555.40 323.10 L542.00 323.10 L547.21 316.80 L542.00 310.50 L555.40 310.50 M555.40 308.40 L546.47 308.40 L542.00 302.10 L546.47 295.80 L555.40 295.80 M550.93 308.40 L550.93 295.80" fill="none" stroke="#1a1a10" stroke-width="1.5" stroke-linecap="round" stroke-linejoin="round"/>
<path d="M620 337.5 H697 A22 22 0 0 0 704.5 318 M611.5 303 A22 22 0 0 0 620 337.5" fill="none" stroke="#effbe6" stroke-width="1.7"/>
<rect x="615.5" y="300" width="88" height="34.5" rx="17" fill="#232a21"/>
<rect x="614.3" y="286.7" width="92.7" height="38.7" rx="19.3" fill="url(#qg)"/>
<path d="M622.60 300.40 L622.60 310.40 M632.10 300.40 L632.10 310.40 M622.60 305.40 L632.10 305.40 M643.40 302.07 L641.02 300.40 L636.27 300.40 L633.90 302.07 L633.90 308.73 L636.27 310.40 L641.02 310.40 L643.40 308.73 M645.99 305.40 L653.91 305.40 M663.62 310.40 L663.62 300.40 L656.50 307.07 L656.50 307.62 L666.00 307.62 M677.30 304.29 L674.93 305.96 L670.18 305.96 L667.80 304.29 L667.80 302.07 L670.18 300.40 L674.93 300.40 L677.30 302.07 L677.30 308.73 L674.93 310.40 L670.18 310.40 L667.80 308.73 M679.10 310.40 L688.60 300.40 M690.40 300.40 L690.40 308.73 L692.78 310.40 L697.53 310.40 L699.90 308.73 L699.90 300.40" fill="none" stroke="#151c14" stroke-width="1.2" stroke-linecap="round" stroke-linejoin="round"/>
<path d="M731 312 V332 H770" fill="none" stroke="#effbe6" stroke-width="1.2"/>
<circle cx="728" cy="321" r="4" fill="#c2cbbb"/><rect x="728" y="319.5" width="8" height="3" fill="#1a1a1a"/>
<path d="M739 308 H772 L778.6 314 V323 L772 329.3 H739 Q734 329 734 323 V314 Q734 308 739 308 Z" fill="url(#bl)"/>
<path d="M749.00 315.00 L744.00 315.00 L744.00 322.00 L749.00 322.00 M744.00 318.50 L747.33 318.50 M750.20 322.00 L750.20 315.00 L753.95 315.00 L755.20 316.17 L755.20 317.72 L753.95 318.89 L750.20 318.89 M756.40 315.00 L756.40 320.83 L757.65 322.00 L760.15 322.00 L761.40 320.83 L761.40 315.00 M767.60 316.17 L766.35 315.00 L763.85 315.00 L762.60 316.17 L762.60 320.83 L763.85 322.00 L766.35 322.00 L767.60 320.83 M773.80 317.72 L772.55 318.89 L770.05 318.89 L768.80 317.72 L768.80 316.17 L770.05 315.00 L772.55 315.00 L773.80 316.17 L773.80 320.83 L772.55 322.00 L770.05 322.00 L768.80 320.83" fill="none" stroke="#0b1468" stroke-width="0.9" stroke-linecap="round" stroke-linejoin="round"/>
<path d="M585.2 363 V353.5 Q585.2 351 587.7 351 H591.7 Q594.2 351 594.2 353.5 V363 Z" fill="#c2cbbb"/><rect x="585.2" y="357" width="9" height="6" fill="#b3bcae"/><rect x="585.2" y="356.8" width="9" height="1.2" fill="#1e251c"/>
<path d="M585.2 412 V422.5 Q585.2 425 587.7 425 H591.7 Q594.2 425 594.2 422.5 V412 Z" fill="#c2cbbb"/><rect x="585.2" y="412" width="9" height="6" fill="#a9b3a3"/><rect x="585.2" y="417.8" width="9" height="1.2" fill="#1e251c"/>
<path d="M604.2 363 V353.5 Q604.2 351 606.7 351 H610.7 Q613.2 351 613.2 353.5 V363 Z" fill="#c2cbbb"/><rect x="604.2" y="357" width="9" height="6" fill="#b3bcae"/><rect x="604.2" y="356.8" width="9" height="1.2" fill="#1e251c"/>
<path d="M604.2 412 V422.5 Q604.2 425 606.7 425 H610.7 Q613.2 425 613.2 422.5 V412 Z" fill="#c2cbbb"/><rect x="604.2" y="412" width="9" height="6" fill="#a9b3a3"/><rect x="604.2" y="417.8" width="9" height="1.2" fill="#1e251c"/>
<path d="M623.2 363 V353.5 Q623.2 351 625.7 351 H629.7 Q632.2 351 632.2 353.5 V363 Z" fill="#c2cbbb"/><rect x="623.2" y="357" width="9" height="6" fill="#b3bcae"/><rect x="623.2" y="356.8" width="9" height="1.2" fill="#1e251c"/>
<path d="M623.2 412 V422.5 Q623.2 425 625.7 425 H629.7 Q632.2 425 632.2 422.5 V412 Z" fill="#c2cbbb"/><rect x="623.2" y="412" width="9" height="6" fill="#a9b3a3"/><rect x="623.2" y="417.8" width="9" height="1.2" fill="#1e251c"/>
<path d="M642.2 363 V353.5 Q642.2 351 644.7 351 H648.7 Q651.2 351 651.2 353.5 V363 Z" fill="#c2cbbb"/><rect x="642.2" y="357" width="9" height="6" fill="#b3bcae"/><rect x="642.2" y="356.8" width="9" height="1.2" fill="#1e251c"/>
<path d="M642.2 412 V422.5 Q642.2 425 644.7 425 H648.7 Q651.2 425 651.2 422.5 V412 Z" fill="#c2cbbb"/><rect x="642.2" y="412" width="9" height="6" fill="#a9b3a3"/><rect x="642.2" y="417.8" width="9" height="1.2" fill="#1e251c"/>
<path d="M661.2 363 V353.5 Q661.2 351 663.7 351 H667.7 Q670.2 351 670.2 353.5 V363 Z" fill="#c2cbbb"/><rect x="661.2" y="357" width="9" height="6" fill="#b3bcae"/><rect x="661.2" y="356.8" width="9" height="1.2" fill="#1e251c"/>
<path d="M661.2 412 V422.5 Q661.2 425 663.7 425 H667.7 Q670.2 425 670.2 422.5 V412 Z" fill="#c2cbbb"/><rect x="661.2" y="412" width="9" height="6" fill="#a9b3a3"/><rect x="661.2" y="417.8" width="9" height="1.2" fill="#1e251c"/>
<path d="M680.2 363 V353.5 Q680.2 351 682.7 351 H686.7 Q689.2 351 689.2 353.5 V363 Z" fill="#c2cbbb"/><rect x="680.2" y="357" width="9" height="6" fill="#b3bcae"/><rect x="680.2" y="356.8" width="9" height="1.2" fill="#1e251c"/>
<path d="M680.2 412 V422.5 Q680.2 425 682.7 425 H686.7 Q689.2 425 689.2 422.5 V412 Z" fill="#c2cbbb"/><rect x="680.2" y="412" width="9" height="6" fill="#a9b3a3"/><rect x="680.2" y="417.8" width="9" height="1.2" fill="#1e251c"/>
<path d="M699.2 363 V353.5 Q699.2 351 701.7 351 H705.7 Q708.2 351 708.2 353.5 V363 Z" fill="#c2cbbb"/><rect x="699.2" y="357" width="9" height="6" fill="#b3bcae"/><rect x="699.2" y="356.8" width="9" height="1.2" fill="#1e251c"/>
<path d="M699.2 412 V422.5 Q699.2 425 701.7 425 H705.7 Q708.2 425 708.2 422.5 V412 Z" fill="#c2cbbb"/><rect x="699.2" y="412" width="9" height="6" fill="#a9b3a3"/><rect x="699.2" y="417.8" width="9" height="1.2" fill="#1e251c"/>
<path d="M718.2 363 V353.5 Q718.2 351 720.7 351 H724.7 Q727.2 351 727.2 353.5 V363 Z" fill="#c2cbbb"/><rect x="718.2" y="357" width="9" height="6" fill="#b3bcae"/><rect x="718.2" y="356.8" width="9" height="1.2" fill="#1e251c"/>
<path d="M718.2 412 V422.5 Q718.2 425 720.7 425 H724.7 Q727.2 425 727.2 422.5 V412 Z" fill="#c2cbbb"/><rect x="718.2" y="412" width="9" height="6" fill="#a9b3a3"/><rect x="718.2" y="417.8" width="9" height="1.2" fill="#1e251c"/>
<path d="M737.2 363 V353.5 Q737.2 351 739.7 351 H743.7 Q746.2 351 746.2 353.5 V363 Z" fill="#c2cbbb"/><rect x="737.2" y="357" width="9" height="6" fill="#b3bcae"/><rect x="737.2" y="356.8" width="9" height="1.2" fill="#1e251c"/>
<path d="M737.2 412 V422.5 Q737.2 425 739.7 425 H743.7 Q746.2 425 746.2 422.5 V412 Z" fill="#c2cbbb"/><rect x="737.2" y="412" width="9" height="6" fill="#a9b3a3"/><rect x="737.2" y="417.8" width="9" height="1.2" fill="#1e251c"/>
<rect x="582" y="363" width="171" height="49.5" fill="#475944"/>
<rect x="582.5" y="363.5" width="170" height="48.5" fill="none" stroke="#34412f" stroke-width="1"/>
<path d="M582 382 A5 5 0 0 1 582 392 Z" fill="#a5ad9f"/>
<path d="M622.40 380.50 L633.73 380.50 L639.40 384.19 L639.40 393.41 L633.73 397.10 L622.40 397.10 L622.40 380.50 M645.63 380.50 L656.97 380.50 M651.30 380.50 L651.30 397.10 M645.63 397.10 L656.97 397.10 M663.20 380.50 L663.20 397.10 L680.20 397.10 M685.02 386.03 L693.52 380.50 L693.52 397.10 M685.02 397.10 L700.60 397.10 M708.53 380.50 L716.47 380.50 L719.87 382.53 L719.87 386.77 L716.47 388.80 L708.53 388.80 L705.13 386.77 L705.13 382.53 L708.53 380.50 M708.25 388.80 L716.75 388.80 L721.00 391.20 L721.00 394.70 L716.75 397.10 L708.25 397.10 L704.00 394.70 L704.00 391.20 L708.25 388.80" fill="none" stroke="#0f1a0e" stroke-width="2.1" stroke-linecap="round" stroke-linejoin="round"/>
<rect x="444" y="388" width="8" height="10" fill="#c2cbbb"/>
<path d="M505 387 H512 A6 6 0 0 1 512 399 H505 Z" fill="#c2cbbb"/><rect x="510" y="389" width="3" height="8" fill="#1c221b"/>
<rect x="444" y="406" width="8" height="10" fill="#c2cbbb"/>
<path d="M505 405 H512 A6 6 0 0 1 512 417 H505 Z" fill="#c2cbbb"/><rect x="510" y="407" width="3" height="8" fill="#1c221b"/>
<rect x="444" y="425" width="8" height="10" fill="#c2cbbb"/>
<path d="M505 424 H512 A6 6 0 0 1 512 436 H505 Z" fill="#c2cbbb"/><rect x="510" y="426" width="3" height="8" fill="#1c221b"/>
<rect x="444" y="444" width="8" height="10" fill="#c2cbbb"/>
<path d="M505 443 H512 A6 6 0 0 1 512 455 H505 Z" fill="#c2cbbb"/><rect x="510" y="445" width="3" height="8" fill="#1c221b"/>
<path d="M506 384 V459.5 H502" fill="none" stroke="#effbe6" stroke-width="1.3"/>
<rect x="451.6" y="384.3" width="53" height="75" fill="#475944"/>
<rect x="452.1" y="384.8" width="52" height="74" fill="none" stroke="#34412f" stroke-width="1"/>
<path d="M471 384.3 A5 5 0 0 0 481 384.3 Z" fill="#a5ad9f"/>
<path d="M484.00 392.30 L484.00 400.70 L480.22 404.90 L470.78 404.90 L467.00 400.70 L467.00 392.30 L484.00 392.30 M484.00 409.30 L484.00 417.70 M484.00 413.50 L467.00 413.50 M467.00 409.30 L467.00 417.70 M484.00 422.10 L467.00 422.10 L467.00 434.70 M484.00 440.36 L484.00 446.24 L481.92 448.76 L477.58 448.76 L475.50 446.24 L475.50 440.36 L477.58 437.84 L481.92 437.84 L484.00 440.36 M475.50 440.15 L475.50 446.45 L473.04 449.60 L469.46 449.60 L467.00 446.45 L467.00 440.15 L469.46 437.00 L473.04 437.00 L475.50 440.15" fill="none" stroke="#0f1a0e" stroke-width="2.1" stroke-linecap="round" stroke-linejoin="round"/>
<path d="M542 382 H563 V421 H556" fill="none" stroke="#effbe6" stroke-width="1.2"/>
<circle cx="549" cy="383" r="4" fill="#c2cbbb"/><circle cx="549" cy="422" r="4" fill="#c2cbbb"/>
<path d="M541 384.5 L543.5 382.2 H556 L560.3 386.5 V418.5 L556 423 H543.5 L538 418 V388 Z" fill="#0a1278"/>
<path d="M541.5 384.5 L543.5 382.5 H553.5 L556 385 V418 L553.5 421.5 H543 L538.2 417.5 V388 Z" fill="#1c2cd0"/>
<path d="M539.5 389 V416" stroke="#3040e8" stroke-width="1.5"/>
<path d="M545.00 413.40 L545.00 418.00 L551.50 418.00 L551.50 413.40 M548.25 418.00 L548.25 414.93 M551.50 411.80 L545.00 411.80 L545.00 408.35 L546.08 407.20 L547.53 407.20 L548.61 408.35 L548.61 411.80 M546.08 401.00 L545.00 402.15 L545.00 404.45 L546.08 405.60 L550.42 405.60 L551.50 404.45 L551.50 402.15 L550.42 401.00 M545.00 398.25 L545.00 395.95 L546.08 394.80 L550.42 394.80 L551.50 395.95 L551.50 398.25 L550.42 399.40 L546.08 399.40 L545.00 398.25 M545.72 388.60 L545.00 389.37 L545.00 392.43 L545.72 393.20 L547.53 393.20 L548.25 392.43 L548.25 389.37 L548.97 388.60 L550.78 388.60 L551.50 389.37 L551.50 392.43 L550.78 393.20" fill="none" stroke="#0b1468" stroke-width="0.9" stroke-linecap="round" stroke-linejoin="round"/>
<circle cx="530" cy="428.6" r="4" fill="#c2cbbb"/><circle cx="530" cy="428.6" r="1.4" fill="#1a1a1a"/>
<circle cx="453.3" cy="359.7" r="6.6" fill="#c2cbbb"/><circle cx="510.3" cy="359.7" r="6.6" fill="#c2cbbb"/>
<path d="M452.3 359.7 H511.3" stroke="#2e352c" stroke-width="3.6" stroke-linecap="round"/><path d="M452.3 359.7 H511.3" stroke="#b9c2b4" stroke-width="1.6" stroke-linecap="round"/>
<rect x="462" y="353.45" width="36.19999999999999" height="12.5" rx="6.2" fill="url(#rc)"/>
<rect x="470" y="354.15" width="3" height="11.1" fill="#e8d820"/>
<rect x="474.5" y="354.15" width="3" height="11.1" fill="#a028b8"/>
<rect x="479" y="354.15" width="3" height="11.1" fill="#d82010"/>
<rect x="485" y="354.15" width="3" height="11.1" fill="#e89030"/>
<path d="M469 352.9 H492.2 M469 366.5 H493.2" stroke="#effbe6" stroke-width="1.2"/>
<circle cx="537.7" cy="453.4" r="6.6" fill="#c2cbbb"/><circle cx="594.8" cy="453.4" r="6.6" fill="#c2cbbb"/>
<path d="M536.7 453.4 H595.8" stroke="#2e352c" stroke-width="3.6" stroke-linecap="round"/><path d="M536.7 453.4 H595.8" stroke="#b9c2b4" stroke-width="1.6" stroke-linecap="round"/>
<rect x="547.1" y="447.15" width="37.5" height="12.5" rx="6.2" fill="url(#rb)"/>
<rect x="554.5" y="447.84999999999997" width="2.5" height="11.1" fill="#d03838"/>
<rect x="558.5" y="447.84999999999997" width="2.5" height="11.1" fill="#d83030"/>
<rect x="563" y="447.84999999999997" width="2.5" height="11.1" fill="#111"/>
<rect x="567.5" y="447.84999999999997" width="3" height="11.1" fill="#f2e418"/>
<rect x="573.5" y="447.84999999999997" width="3" height="11.1" fill="#8a5a20"/>
<path d="M554.1 446.59999999999997 H578.6 M554.1 460.2 H579.6" stroke="#effbe6" stroke-width="1.2"/>
<circle cx="462.7" cy="486.6" r="6.6" fill="#c2cbbb"/><circle cx="519.8" cy="486.6" r="6.6" fill="#c2cbbb"/>
<path d="M461.7 486.6 H520.8" stroke="#2e352c" stroke-width="3.6" stroke-linecap="round"/><path d="M461.7 486.6 H520.8" stroke="#b9c2b4" stroke-width="1.6" stroke-linecap="round"/>
<rect x="470.4" y="480.35" width="38.30000000000001" height="12.5" rx="6.2" fill="url(#rb)"/>
<rect x="476.5" y="481.05" width="3" height="11.1" fill="#d82020"/>
<rect x="480.5" y="481.05" width="2" height="11.1" fill="#d82020"/>
<rect x="484" y="481.05" width="2.5" height="11.1" fill="#111"/>
<rect x="488" y="481.05" width="3" height="11.1" fill="#f2e418"/>
<rect x="494" y="481.05" width="3" height="11.1" fill="#8a5a20"/>
<path d="M477.4 479.8 H502.7 M477.4 493.40000000000003 H503.7" stroke="#effbe6" stroke-width="1.2"/>
<circle cx="688.8" cy="448.9" r="6.6" fill="#c2cbbb"/><circle cx="745.9" cy="448.9" r="6.6" fill="#c2cbbb"/>
<path d="M687.8 448.9 H746.9" stroke="#2e352c" stroke-width="3.6" stroke-linecap="round"/><path d="M687.8 448.9 H746.9" stroke="#b9c2b4" stroke-width="1.6" stroke-linecap="round"/>
<rect x="699.1" y="442.65" width="38.10000000000002" height="12.5" rx="6.2" fill="url(#rb)"/>
<rect x="707" y="443.34999999999997" width="3" height="11.1" fill="#eadc20"/>
<rect x="711" y="443.34999999999997" width="3" height="11.1" fill="#a028b8"/>
<rect x="715.5" y="443.34999999999997" width="2" height="11.1" fill="#111"/>
<rect x="719.5" y="443.34999999999997" width="3" height="11.1" fill="#e08830"/>
<rect x="725.5" y="443.34999999999997" width="3" height="11.1" fill="#8a5a20"/>
<path d="M706.1 442.09999999999997 H731.2 M706.1 455.7 H732.2" stroke="#effbe6" stroke-width="1.2"/>
<circle cx="688.8" cy="482.2" r="6.6" fill="#c2cbbb"/><circle cx="745.9" cy="482.2" r="6.6" fill="#c2cbbb"/>
<path d="M687.8 482.2 H746.9" stroke="#2e352c" stroke-width="3.6" stroke-linecap="round"/><path d="M687.8 482.2 H746.9" stroke="#b9c2b4" stroke-width="1.6" stroke-linecap="round"/>
<rect x="699.1" y="475.95" width="38.10000000000002" height="12.5" rx="6.2" fill="url(#rc)"/>
<rect x="707" y="476.65" width="3" height="11.1" fill="#eadc20"/>
<rect x="712" y="476.65" width="3" height="11.1" fill="#a028b8"/>
<rect x="716.5" y="476.65" width="3" height="11.1" fill="#d82010"/>
<rect x="722" y="476.65" width="3" height="11.1" fill="#e89030"/>
<path d="M706.1 475.4 H731.2 M706.1 489.0 H732.2" stroke="#effbe6" stroke-width="1.2"/>
<path d="M545 477.5 H558 L562 481.5 L566 477.5 H577 L581 481.5 L585 477.5 H596 L600 482 V495 L596.5 499 H583 L579.5 495.5 L576 499 H562 L558.5 495.5 L555 499 H545 L541 495 V482 Z" fill="#1f2c20"/>
<path d="M541 482 L545 477.5 H558 L562 481.5 L566 477.5 H577 L581 481.5 L585 477.5 H596 L600.3 482 V494" fill="none" stroke="#effbe6" stroke-width="1.2"/>
<rect x="543.2" y="495" width="4.6" height="3.6" fill="#a9c2aa"/>
<rect x="563.2" y="495" width="4.6" height="3.6" fill="#a9c2aa"/>
<rect x="584.3000000000001" y="495" width="4.6" height="3.6" fill="#a9c2aa"/>
<rect x="664" y="433" width="10" height="6" fill="#c2cbbb" stroke="#effbe6" stroke-width="1" transform="rotate(-45 669 436)"/>
<circle cx="644" cy="466.5" r="37.5" fill="#effbe6"/>
<circle cx="644" cy="466.5" r="36.3" fill="#b3bcae"/>
<circle cx="644.4" cy="471" r="35.5" fill="url(#tg)"/>
<path d="M614.30 464.00 L626.80 464.00 M620.55 464.00 L620.55 482.20 M632.82 464.00 L639.07 464.00 L642.20 467.03 L642.20 479.17 L639.07 482.20 L632.82 482.20 L629.70 479.17 L629.70 467.03 L632.82 464.00 M645.10 466.43 L647.60 464.00 L655.10 464.00 L657.60 466.43 L657.60 470.67 L655.10 473.10 L649.27 473.10 M655.10 473.10 L657.60 475.53 L657.60 479.77 L655.10 482.20 L647.60 482.20 L645.10 479.77 M673.00 471.08 L669.88 474.11 L663.62 474.11 L660.50 471.08 L660.50 467.03 L663.62 464.00 L669.88 464.00 L673.00 467.03 L673.00 479.17 L669.88 482.20 L663.62 482.20 L660.50 479.17" fill="none" stroke="#0c120b" stroke-width="1.8" stroke-linecap="round" stroke-linejoin="round"/>
<path d="M764 374 H798 L802 378 V386 L798 393 L802 398 V407 L798 414 L802 419 V428 L798 435 L802 440 V449 L798 455 L802 460 V465 L798 469 H764 L760 465 V460 L764 455 L760 449 V440 L764 435 L760 428 V419 L764 414 L760 407 V398 L764 393 L760 386 V378 Z" fill="#1f2c20"/>
<path d="M798 469.5 H764 L759.5 465 V460 L763.5 455 L759.5 449 V440 L763.5 435 L759.5 428 V419 L763.5 414 L759.5 407 V398 L763.5 393 L759.5 386 V378 L764 373.5 H798" fill="none" stroke="#effbe6" stroke-width="1.2"/>
<path d="M770 382.4 H800" stroke="#34412f" stroke-width="4"/>
<rect x="780.5" y="379.7" width="5.4" height="5.4" fill="#cbd5c4"/><rect x="801.5" y="379.7" width="5.4" height="5.4" fill="#cbd5c4"/>
<path d="M770 403.8 H800" stroke="#34412f" stroke-width="4"/>
<rect x="780.5" y="401.1" width="5.4" height="5.4" fill="#cbd5c4"/><rect x="801.5" y="401.1" width="5.4" height="5.4" fill="#cbd5c4"/>
<path d="M770 424.3 H800" stroke="#34412f" stroke-width="4"/>
<rect x="780.5" y="421.6" width="5.4" height="5.4" fill="#cbd5c4"/><rect x="801.5" y="421.6" width="5.4" height="5.4" fill="#cbd5c4"/>
<path d="M770 445 H800" stroke="#34412f" stroke-width="4"/>
<rect x="780.5" y="442.3" width="5.4" height="5.4" fill="#cbd5c4"/><rect x="801.5" y="442.3" width="5.4" height="5.4" fill="#cbd5c4"/>
<path d="M770 465.3 H800" stroke="#34412f" stroke-width="4"/>
<rect x="780.5" y="462.6" width="5.4" height="5.4" fill="#cbd5c4"/><rect x="801.5" y="462.6" width="5.4" height="5.4" fill="#cbd5c4"/>
 <path d="M294 500.4 H440" stroke="#e00c10" stroke-width="2.7"/>
 <path d="M440 500.5 L392.4 530" stroke="#0808c0" stroke-width="2.1"/>
 <path d="M441.5 501 V647" stroke="#18e018" stroke-width="3"/>
 <path d="M272 496.3 H277.6" stroke="#c80a14" stroke-width="2.2"/>
 <path d="M280.6 486.8 L291 500.3 M291 486.8 L280.6 500.3" stroke="#d80c16" stroke-width="2.3"/>
 <path d="M383 522 H392.6 L383.3 534.9 H392.8" fill="none" stroke="#0000c4" stroke-width="2" stroke-linejoin="bevel"/>
 <path d="M441 665 H447" stroke="#12c812" stroke-width="2.2"/>
 <path d="M448.8 655.6 L455 662 L461.2 655.6 M455 662 V669.6" fill="none" stroke="#14d214" stroke-width="2.3"/>
 <path d="M989 702 L992.5 706 L996 702" fill="none" stroke="#000" stroke-width="2.4"/>
</svg>

<!-- status bar -->
<div class="a" style="left:240px;top:719px;width:764px;height:1px;background:#fafafa"></div><div class="a" style="left:65px;top:720px;width:939px;height:1px;background:#fafafa"></div>
<div class="a" style="left:65px;top:740px;width:939px;height:1px;background:#a0a0a0"></div>
<svg class="a" style="left:990px;top:728px" width="14" height="12"><g fill="#a4aaaa"><rect x="10" y="2" width="2" height="2"/><rect x="7" y="5" width="2" height="2"/><rect x="10" y="5" width="2" height="2"/><rect x="4" y="8" width="2" height="2"/><rect x="7" y="8" width="2" height="2"/><rect x="10" y="8" width="2" height="2"/></g></svg>
<div class="a" style="left:67px;top:724px;font-size:14.5px;white-space:nowrap;letter-spacing:0.1px">Rot:&nbsp; X=0,00° / Y=0,00° / Z=0,00°</div>
<div class="a" style="left:344px;top:721px;width:1px;height:19px;background:#d0d0d0"></div><div class="a" style="left:644px;top:721px;width:1px;height:19px;background:#d0d0d0"></div><div class="a" style="left:65px;top:721px;width:939px;height:1px;background:#e2e2e2"></div>
<div class="a" style="left:349px;top:724px;font-size:14.5px;white-space:nowrap;letter-spacing:0.05px">Auge Pos:&nbsp; X=0,00 / Y=0,00 / Z=95,00 mm</div>

<!-- dialog -->
<div class="a" style="left:68px;top:183px;width:355px;height:236px;background:#f0f0f0;border:1px solid #6e6e6e;box-shadow:2px 2px 5px rgba(0,0,0,0.18)"></div>
<div class="a" style="left:69px;top:184px;width:353px;height:25px;background:#fff"></div>
<div class="a" style="left:419px;top:209px;width:3px;height:209px;background:#fff"></div>
<div class="a" style="left:72px;top:189px;font-size:12px;white-space:nowrap;transform:scaleX(1.02);transform-origin:0 0;color:#111">Configure view</div>
<svg class="a" style="left:0;top:0" width="430" height="210"><path d="M402 191 L412 201 M412 191 L402 201" stroke="#111" stroke-width="1.2"/></svg>
<div class="lbl" style="left:85px;top:225px;transform:scaleX(0.963);transform-origin:0 0">Position of the eye [mm] :</div>
<div class="lbl" style="left:114px;top:253px">X:</div>
<div class="inp" style="left:125px;top:249px;border-color:#0078d7"><span style="background:#0078d7;color:#fff">0</span></div>
<div class="lbl" style="left:202px;top:253px">Y:</div>
<div class="inp" style="left:213px;top:249px">0</div>
<div class="lbl" style="left:289px;top:253px">Z:</div>
<div class="inp" style="left:301px;top:249px">50</div>
<div class="lbl" style="left:85px;top:297px;letter-spacing:-0.12px">Angles around the axes [ ° ] :</div>
<div class="lbl" style="left:114px;top:325px">X:</div>
<div class="inp" style="left:125px;top:321px">0</div>
<div class="lbl" style="left:202px;top:325px">Y:</div>
<div class="inp" style="left:213px;top:321px">0</div>
<div class="lbl" style="left:289px;top:325px">Z:</div>
<div class="inp" style="left:301px;top:321px">0</div>
<div class="a" style="left:206px;top:370px;width:73px;height:23px;border:2px solid #0078d7;background:#e1e1e1;font-size:11.5px;line-height:20px;text-align:center;color:#111">OK</div>
<div class="a" style="left:294px;top:370px;width:73px;height:23px;border:1px solid #adadad;background:#e1e1e1;font-size:11.5px;line-height:22px;text-align:center;color:#111">Cancel</div>

<!-- annotations -->
<svg class="a" style="left:0;top:0" width="1009" height="745">
 <path d="M17 48 H44" stroke="#ff8412" stroke-width="3.6"/>
 <path d="M41 38.5 L64.5 48 L41 59 Z" fill="#ff8412" stroke="#ff8412" stroke-width="1.5" stroke-linejoin="round"/>
 <path d="M83 63.5 L95 166" stroke="#ff8412" stroke-width="3.6"/>
 <path d="M84 163.5 L105.4 162 L98 185 Z" fill="#ff8412" stroke="#ff8412" stroke-width="1.5" stroke-linejoin="round"/>
 <text x="8.3" y="82.3" font-family="Liberation Sans" font-weight="bold" font-size="23.5" fill="#f7841a" textLength="35" lengthAdjust="spacingAndGlyphs">M2</text>
</svg>
<div class="a" style="left:0;top:0;width:1009px;height:745px;border-style:solid;border-color:#ff8000;border-width:2px;box-shadow:inset 0 0 0 1px #e4832a,inset 0 0 0 2px rgba(250,196,130,0.55)"></div>
</body></html>
